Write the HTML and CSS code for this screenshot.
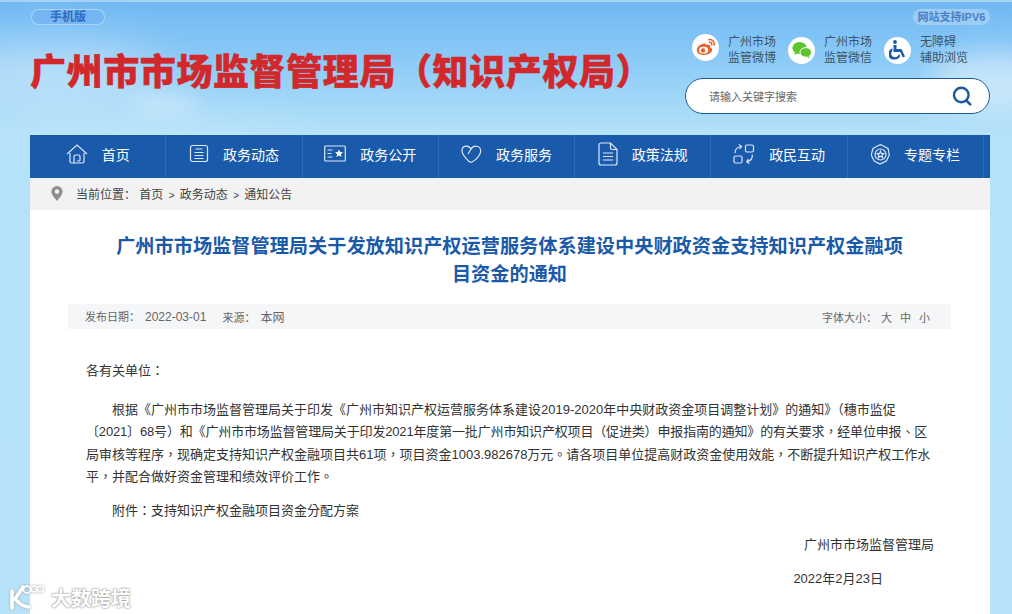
FILE: index.html
```html
<!DOCTYPE html>
<html lang="zh-CN">

<head>
    <meta charset="UTF-8">
    <meta name="viewport" content="width=device-width, initial-scale=1.0">
    <title>广州市市场监督管理局（知识产权局）</title>
    <link rel="stylesheet" href="styles.css">
</head>

<body>
    <div class="cloud cloud-a"></div>
    <div class="cloud cloud-b"></div>
    <div class="cloud cloud-c"></div>
    <div class="cloud cloud-d"></div>

    <header class="header">
        <div class="header-left">
            <a class="pill pill-mobile">手机版</a>
            <h1 class="site-title">广州市市场监督管理局（知识产权局）</h1>
        </div>
        <div class="header-right">
            <a class="pill pill-ipv6">网站支持IPV6</a>
            <div class="quick-links">
                <a class="quick-link quick-up">
                    <span class="quick-icon">
                        <svg width="20" height="18" viewBox="0 0 20 18">
                            <path d="M8.5 5.5C4.5 6 .8 9 .8 12.2.8 15.3 4.3 17 8 17c4.3 0 8.2-2.3 8.2-5.2 0-1.6-1.5-2.3-2.4-2.6.5-1.3.3-2.6-2-2.6-.8 0-1.6.3-2.2.5.3-1.3.1-2-1.1-1.6Z" fill="#e8622a" />
                            <ellipse cx="7.6" cy="12.2" rx="4.6" ry="3.4" fill="#fff" />
                            <circle cx="7" cy="12.4" r="2.2" fill="#e8622a" />
                            <path d="M13 1.6c3.2-.6 6 2.2 5.2 5.6M13.3 4.2c1.6-.3 2.8 1 2.4 2.6" fill="none" stroke="#e8622a" stroke-width="1.5" stroke-linecap="round" />
                        </svg>
                    </span>
                    <span class="quick-text">广州市场<br>监管微博</span>
                </a>
                <a class="quick-link">
                    <span class="quick-icon">
                        <svg width="20" height="18" viewBox="0 0 20 18">
                            <ellipse cx="7.6" cy="7" rx="7.2" ry="6" fill="#5fc52e" />
                            <path d="M3.2 11l-.8 3 3.2-1.8Z" fill="#5fc52e" />
                            <ellipse cx="13.8" cy="11.4" rx="5.8" ry="4.8" fill="#5fc52e" stroke="#fff" stroke-width="1" />
                            <path d="M16.6 15l1.2 2.4-3.2-1.6Z" fill="#5fc52e" />
                        </svg>
                    </span>
                    <span class="quick-text">广州市场<br>监管微信</span>
                </a>
                <a class="quick-link">
                    <span class="quick-icon">
                        <svg width="17" height="20" viewBox="0 0 17 20">
                            <circle cx="6" cy="2" r="1.9" fill="#1c5aa8" />
                            <path d="M4.5 5h3v4h5l3.5 7.5-2.2 1-2.5-5.5H4.5Z" fill="#1c5aa8" />
                            <path d="M3.4 8.5A5.6 5.6 0 0 0 6 19.4c2.4 0 4.4-1.3 5.2-3.4l-1.2-2.2c-.3 2-2 3.4-4 3.4a3.6 3.6 0 0 1-2.6-6.2Z" fill="#1c5aa8" />
                        </svg>
                    </span>
                    <span class="quick-text">无障碍<br>辅助浏览</span>
                </a>
            </div>
            <div class="search">
                <span class="search-text">请输入关键字搜索</span>
                <svg width="20" height="20" viewBox="0 0 20 20">
                    <circle cx="9.3" cy="9" r="7.3" fill="none" stroke="#1c5aa0" stroke-width="2.4" />
                    <path d="M14.2 14.4l4 4" stroke="#1c5aa0" stroke-width="2.6" stroke-linecap="round" />
                </svg>
            </div>
        </div>
    </header>

    <div class="wrap">
        <nav class="nav">
            <a class="nav-item">
                <svg class="nav-icon" width="22" height="22" viewBox="0 0 22 22">
                    <path d="M1 11 11 2l10 9M4 10v8.5c0 1 .6 1.5 1.5 1.5h11c.9 0 1.5-.5 1.5-1.5V10" />
                    <path d="M8 20v-6.5c0-.9.6-1.5 1.5-1.5h3c.9 0 1.5.6 1.5 1.5V17c0 .6-.4 1-1 1h-2" />
                </svg>
                <span>首页</span>
            </a>
            <a class="nav-item">
                <svg class="nav-icon" width="20" height="20" viewBox="0 0 20 20">
                    <rect x="1.5" y="1.5" width="17" height="16" rx="2" />
                    <path d="M6.5 5h7M5.5 8.5h9M5.5 11.5h9M5.5 14.5h9" />
                </svg>
                <span>政务动态</span>
            </a>
            <a class="nav-item">
                <svg class="nav-icon" width="22" height="18" viewBox="0 0 22 18">
                    <rect x=".7" y="1" width="20.6" height="15" rx="1" />
                    <path d="M3.5 5h5M3.5 8.5h4M3.5 12h5" />
                    <path class="nav-solid" d="m15 4.4 1.2 2.6 2.8.3-2.1 1.9.6 2.8-2.5-1.4-2.5 1.4.6-2.8-2.1-1.9 2.8-.3Z" />
                </svg>
                <span>政务公开</span>
            </a>
            <a class="nav-item">
                <svg class="nav-icon" width="21" height="18" viewBox="0 0 21 18">
                    <path d="M8 16.5C5 13.5 1 10 1 5.8 1 3 3 1.200 5.500 1.200c2 0 3.500 1.100 4.500 2.800 1-1.700 2.700-2.800 4.700-2.800 2.800 0 5 2 5 4.800 0 4.200-5 9-8.700 11-.8.400-1.700.300-2.500-.500Z" />
                    <path d="M10 4 7 9" />
                </svg>
                <span>政务服务</span>
            </a>
            <a class="nav-item">
                <svg class="nav-icon" width="20" height="24" viewBox="0 0 20 24">
                    <path d="M12.500 1H3a2 2 0 0 0-2 2v18a2 2 0 0 0 2 2h14a2 2 0 0 0 2-2V7.500Z" />
                    <path d="M12.500 1v5a1.500 1.500 0 0 0 1.500 1.500h5M5 11h10M5 14.500h10M5 18h10" />
                </svg>
                <span>政策法规</span>
            </a>
            <a class="nav-item">
                <svg class="nav-icon" width="22" height="20" viewBox="0 0 22 20">
                    <rect x="12.500" y="1" width="8" height="7" rx="1.500" />
                    <rect x="1" y="12" width="8" height="7" rx="1.500" />
                    <path d="M2 9c0-4 2-6 6.500-6.500M6 .5l2.500 2-2 2.500" />
                    <path d="M20 11c0 4-2 6-6.500 6.500M16 19.500l-2.500-2 2-2.500" transform="rotate(-8 16 16)" />
                </svg>
                <span>政民互动</span>
            </a>
            <a class="nav-item">
                <svg class="nav-icon" width="19" height="21" viewBox="0 0 19 21">
                    <path d="M7.500 1.500 9.500.6l2 .9 5.500 3 1.300 6.500-3 6-6.300 3-5.800-3-3-6L2 4.500Z" />
                    <circle cx="9.500" cy="10.500" r="5.500" />
                    <path d="m9.500 7.200 1 2.200 2.300.2-1.700 1.600.5 2.300-2.100-1.200-2.100 1.200.5-2.300-1.700-1.600 2.300-.2Z" />
                </svg>
                <span>专题专栏</span>
            </a>
        </nav>

        <div class="crumb">
            <svg width="12" height="15" viewBox="0 0 12 15">
                <path fill-rule="evenodd" d="M6 0a5.600 5.600 0 0 1 5.600 5.600C11.600 9 8 12.500 6 15 4 12.500.4 9 .4 5.600A5.600 5.600 0 0 1 6 0Zm0 3.300a2.300 2.300 0 1 0 0 4.600 2.300 2.300 0 0 0 0-4.600Z" fill="#8f8f8f" />
            </svg>
            <span class="crumb-text">当前位置：&nbsp;首页&nbsp;<small>&gt;</small>&nbsp;政务动态&nbsp;<small>&gt;</small>&nbsp;通知公告</span>
        </div>

        <main class="article">
            <h2 class="article-title">广州市市场监督管理局关于发放知识产权运营服务体系建设中央财政资金支持知识产权金融项<br>目资金的通知</h2>
            <div class="meta">
                <div class="meta-info">
                    <span>发布日期：<b>2022-03-01</b></span>
                    <span>来源：<b>本网</b></span>
                </div>
                <div class="meta-size">
                    <span class="meta-size-label">字体大小：</span>
                    <a>大</a>
                    <a>中</a>
                    <a>小</a>
                </div>
            </div>
            <div class="article-body" lang="zh-TW">
                <p class="greeting">各有关单位：</p>
                <p class="indent">根据《广州市市场监督管理局关于印发《广州市知识产权运营服务体系建设2019-2020年中央财政资金项目调整计划》的通知》（穗市监促<span class="tight">〔2021〕68号）和《广州市市场监督管理局关于印发2021年度第一批广州市知识产权项目（促进类）申报指南的通知》的有关要求，经单位申报、区</span>局审核等程序，现确定支持知识产权金融项目共61项，项目资金1003.982678万元。请各项目单位提高财政资金使用效能，不断提升知识产权工作水平，并配合做好资金管理和绩效评价工作。</p>
                <p class="indent">附件：支持知识产权金融项目资金分配方案</p>
                <p class="sign">广州市市场监督管理局</p>
                <p class="sign sign-date">2022年2月23日</p>
            </div>
        </main>
    </div>

    <div class="watermark">
        <svg width="38" height="28" viewBox="0 0 38 28">
            <path d="M4 7v17M15 3C11 9 9 12 7 15c3 3 7 8 14 8" fill="none" stroke="#fff" stroke-width="3.600" stroke-linecap="round" />
            <circle cx="19" cy="5.500" r="3.500" fill="none" stroke="#fff" stroke-width="1.800" />
            <circle cx="26" cy="5" r="3" fill="none" stroke="#fff" stroke-width="1.500" />
            <circle cx="32.500" cy="5" r="3" fill="none" stroke="#fff" stroke-width="1.500" />
        </svg>
        <span>大数跨境</span>
    </div>
</body>

</html>
```
FILE: styles.css
```css
html,
body {
    height: 100%;
    overflow: hidden;
}

body {
    margin: 0;
    position: relative;
    color: #333;
    font-family: "Liberation Sans", "Noto Sans CJK SC", sans-serif;
    background: linear-gradient(#6fb8f4 0, #8ccaf6 60px, #b4e2f9 135px, #b6e3f9 100%);
    border-top: 2px solid #a9d3f3;
    box-sizing: border-box;
}

a {
    color: inherit;
    text-decoration: none;
}

/* 背景雲 */
.cloud {
    position: absolute;
    border-radius: 50%;
    background: #fff;
    filter: blur(22px);
}

.cloud-a {
    left: -60px;
    top: 40px;
    width: 220px;
    height: 60px;
    opacity: 0.35;
}

.cloud-b {
    left: 130px;
    top: 92px;
    width: 70px;
    height: 20px;
    opacity: 0.35;
    filter: blur(10px);
}

.cloud-c {
    left: 930px;
    top: 50px;
    width: 130px;
    height: 60px;
    opacity: 0.45;
    filter: blur(14px);
}

.cloud-d {
    left: 0;
    top: 115px;
    width: 300px;
    height: 24px;
    opacity: 0.2;
}

/* header */
.header {
    position: relative;
    width: 960px;
    height: 133px;
    margin-left: 30px;
    display: flex;
    justify-content: space-between;
}

.header-left {
    display: flex;
    flex-direction: column;
    align-items: flex-start;
    padding-top: 7px;
}

.pill {
    display: block;
    height: 16px;
    line-height: 16px;
    border-radius: 8px;
    font-size: 11px;
    font-weight: bold;
    text-align: center;
    color: #2f6cc0;
}

.pill-mobile {
    width: 72px;
    margin-left: 1px;
    border: 1px solid rgba(190, 225, 250, 0.7);
    background: rgba(110, 175, 240, 0.55);
    height: 14px;
    line-height: 14px;
    font-size: 12px;
}

.pill-ipv6 {
    width: 77px;
    background: rgba(180, 215, 245, 0.6);
    color: #4a80c4;
    font-size: 11px;
}

.site-title {
    margin: 26px 0 0;
    font-size: 36px;
    line-height: 44px;
    font-weight: 900;
    letter-spacing: 0.6px;
    color: #d1282c;
    white-space: nowrap;
    -webkit-text-stroke: 0.5px #d1282c;
}

.header-right {
    width: 305px;
    padding-top: 7px;
    display: flex;
    flex-direction: column;
    align-items: flex-end;
}

.quick-links {
    align-self: flex-start;
    display: flex;
    margin: 9px 0 0 7px;
    gap: 12px;
}

.quick-link {
    display: flex;
    align-items: center;
    gap: 9px;
    height: 32px;
}

.quick-icon {
    width: 27px;
    height: 27px;
    border-radius: 50%;
    background: #fff;
    display: flex;
    align-items: center;
    justify-content: center;
}

.quick-up .quick-icon {
    margin-top: -6px;
}

.quick-text {
    font-size: 12px;
    line-height: 16px;
    color: #3c5566;
    width: 48px;
}

.search {
    align-self: stretch;
    box-sizing: border-box;
    height: 36px;
    margin-top: 12px;
    padding: 0 17px 0 23px;
    border: 1px solid #1d5a9f;
    border-radius: 18px;
    background: #fff;
    display: flex;
    align-items: center;
    justify-content: space-between;
}

.search-text {
    font-size: 11px;
    color: #666;
}

/* nav */
.wrap {
    position: relative;
    width: 960px;
    margin-left: 30px;
    min-height: 480px;
    background: #fff;
}

.nav {
    height: 43px;
    background: #1a5aab;
    display: flex;
}

.nav-item {
    box-sizing: border-box;
    width: 136.3px;
    padding-bottom: 5px;
    border-right: 1px solid #2c6db8;
    display: flex;
    align-items: center;
    justify-content: center;
    gap: 14px;
    font-size: 14px;
    color: #fff;
}

.nav-icon {
    flex: none;
    fill: none;
    stroke: #dbe8f6;
    stroke-width: 1.2;
}

.nav-solid {
    fill: #fff;
    stroke: none;
}

.crumb {
    box-sizing: border-box;
    height: 32px;
    padding: 0 0 2px 21px;
    background: #f2f2f2;
    display: flex;
    align-items: center;
    gap: 13px;
    font-size: 12px;
    color: #444;
}

.crumb small {
    margin: 0 2px;
    font-size: 10px;
}

/* 內容 */
.article {
    padding: 23px 38px 0;
}

.article-title {
    margin: 0 1px 0 0;
    font-size: 19.2px;
    line-height: 28px;
    font-weight: bold;
    text-align: center;
    color: #1a5aa8;
}

.meta {
    height: 25px;
    margin: 15px 1px 0 0;
    padding: 0 21px 0 17px;
    background: #f5f6f7;
    display: flex;
    align-items: center;
    justify-content: space-between;
    font-size: 11px;
    color: #666;
}

.meta-info {
    display: flex;
    gap: 16px;
}

.meta-info b {
    margin-left: 5px;
    font-size: 12px;
    font-weight: normal;
}

.meta-size {
    display: flex;
    gap: 8px;
}

.meta-size-label {
    margin-right: -4px;
}

/* 標點置中，與原圖一致 */
.article-body {
    padding: 31px 14px 0 18px;
    font-family: "Liberation Sans", "Noto Sans CJK TC", sans-serif;
    font-size: 13px;
    line-height: 22.4px;
    color: #333;
}

.article-body p {
    margin: 0 0 11.6px;
}

.article-body .greeting {
    margin-bottom: 16.6px;
}

.indent {
    text-indent: 26px;
}

.tight {
    letter-spacing: -0.16px;
}

.sign {
    padding-right: 4px;
    text-align: right;
}

.sign-date {
    padding-right: 55px;
}

/* 浮水印 */
.watermark {
    position: absolute;
    left: 8px;
    bottom: 2px;
    display: flex;
    align-items: center;
    gap: 5px;
    color: #fff;
    font-size: 20px;
    font-weight: bold;
    text-shadow: 0 0 2px #999, 0 0 2px #999;
}

.watermark svg {
    filter: drop-shadow(0 0 1px #999);
}
```
